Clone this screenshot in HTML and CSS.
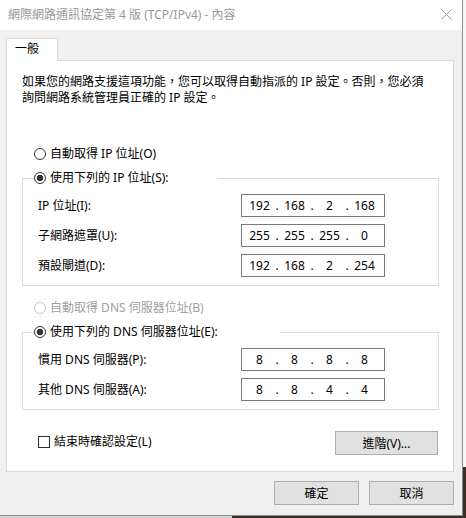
FILE: index.html
```html
<!DOCTYPE html>
<html>
  <head>
    <meta charset="utf-8">
    <title>網際網路通訊協定第 4 版 (TCP/IPv4) - 內容</title>
    <link rel="stylesheet" href="styles.css">
  </head>
  <body>
    <div class="window">
      <div class="titlebar">
        <span class="title">網際網路通訊協定第 4 版 (TCP/IPv4) - 內容</span>
        <svg class="close" width="11" height="11" viewBox="0 0 11 11">
          <path d="M0.5 0.5 L10.5 10.5 M10.5 0.5 L0.5 10.5" stroke="#9a9a9a" stroke-width="1" fill="none"/>
        </svg>
      </div>
      <div class="client">
        <div class="tabs">
          <div class="tab">一般</div>
        </div>
        <div class="panel">
          <p class="intro">如果您的網路支援這項功能，您可以取得自動指派的 IP 設定。否則，您必須<br>詢問網路系統管理員正確的 IP 設定。</p>

          <label class="option first"><span class="radio"></span>自動取得 IP 位址(O)</label>
          <fieldset class="group">
            <legend class="ip-legend"><label class="option"><span class="radio on"></span>使用下列的 IP 位址(S):</label></legend>
            <div class="rows">
              <span class="label">IP 位址(I):</span>
              <div class="ip"><span class="oct">192</span><span class="dot">.</span><span class="oct">168</span><span class="dot">.</span><span class="oct">2</span><span class="dot">.</span><span class="oct">168</span></div>
              <span class="label">子網路遮罩(U):</span>
              <div class="ip"><span class="oct">255</span><span class="dot">.</span><span class="oct">255</span><span class="dot">.</span><span class="oct">255</span><span class="dot">.</span><span class="oct">0</span></div>
              <span class="label">預設閘道(D):</span>
              <div class="ip"><span class="oct">192</span><span class="dot">.</span><span class="oct">168</span><span class="dot">.</span><span class="oct">2</span><span class="dot">.</span><span class="oct">254</span></div>
            </div>
          </fieldset>

          <label class="option second disabled"><span class="radio"></span>自動取得 DNS 伺服器位址(B)</label>
          <fieldset class="group">
            <legend class="dns-legend"><label class="option"><span class="radio on"></span>使用下列的 DNS 伺服器位址(E):</label></legend>
            <div class="rows">
              <span class="label">慣用 DNS 伺服器(P):</span>
              <div class="ip"><span class="oct">8</span><span class="dot">.</span><span class="oct">8</span><span class="dot">.</span><span class="oct">8</span><span class="dot">.</span><span class="oct">8</span></div>
              <span class="label">其他 DNS 伺服器(A):</span>
              <div class="ip"><span class="oct">8</span><span class="dot">.</span><span class="oct">8</span><span class="dot">.</span><span class="oct">4</span><span class="dot">.</span><span class="oct">4</span></div>
            </div>
          </fieldset>

          <div class="bottom-row">
            <label class="check"><span class="box"></span>結束時確認設定(L)</label>
            <button class="btn advanced">進階(V)...</button>
          </div>
        </div>
        <div class="footer">
          <button class="btn">確定</button>
          <button class="btn">取消</button>
        </div>
      </div>
    </div>
  </body>
</html>
```

FILE: styles.css
```css
html, body {
    margin: 0;
    padding: 0;
}

body {
    width: 466px;
    height: 518px;
    overflow: hidden;
    font-family: "Noto Sans", "Noto Sans CJK TC", sans-serif;
    font-size: 12px;
    color: #000;
    background:
        linear-gradient(#f7f7f7, #f7f7f7) right top / 3px 467px no-repeat,
        linear-gradient(#d4d4d4, #d4d4d4) left bottom / 232px 3px no-repeat,
        #3b2e26;
}

.window {
    width: 462px;
    height: 515px;
    border-right: 1px solid #8c8c8c;
    border-bottom: 1px solid #8c8c8c;
    background: #f0f0f0;
    display: flex;
    flex-direction: column;
}

.titlebar {
    height: 30px;
    background: #fff;
    display: flex;
    align-items: center;
    justify-content: space-between;
    padding: 0 10px 1px 8px;
    box-sizing: border-box;
}

.title {
    color: #999;
    line-height: 16px;
}

.close {
    display: block;
    margin-top: 0;
}

.client {
    padding: 8px 8px 0 6px;
}

.tabs {
    display: flex;
}

.tab {
    position: relative;
    z-index: 1;
    width: 52px;
    height: 23px;
    box-sizing: border-box;
    margin-bottom: -1px;
    padding-left: 8px;
    line-height: 20px;
    background: #fff;
    border: 1px solid #d9d9d9;
    border-bottom: none;
}

.panel {
    background: #fff;
    border: 1px solid #d9d9d9;
    padding: 13px 14px 16px 15px;
}

.intro {
    margin: 0;
    line-height: 16px;
}

.option {
    display: flex;
    align-items: center;
    line-height: 16px;
    white-space: nowrap;
}

.option.first {
    margin-top: 40px;
    padding-left: 12px;
}

.option.second {
    margin-top: 14px;
    padding-left: 12px;
}

.option.disabled {
    color: #a0a0a0;
}

.radio {
    width: 12px;
    height: 12px;
    box-sizing: border-box;
    border: 1px solid #333;
    border-radius: 50%;
    margin-right: 4px;
    background: #fff;
}

.radio.on {
    background: radial-gradient(circle, #333 0, #333 3px, #fff 3.6px);
}

.disabled .radio {
    border-color: #c4c4c4;
}

.group {
    margin: 8px 0 0 0;
    padding: 8px 0 8px 0;
    border: 1px solid #dcdcdc;
    min-width: 0;
}

.group legend {
    padding: 0;
    margin-left: 11px;
}

.ip-legend {
    width: 183px;
}

.dns-legend {
    width: 246px;
}

.rows {
    display: grid;
    grid-template-columns: 203px 144px;
    row-gap: 7px;
    padding-left: 15px;
}

.label {
    line-height: 23px;
    white-space: nowrap;
}

.ip {
    display: flex;
    align-items: center;
    height: 23px;
    box-sizing: border-box;
    border: 1px solid #7a7a7a;
    padding-left: 4px;
    line-height: 16px;
}

.oct {
    width: 27px;
    text-align: center;
}

.dot {
    width: 8px;
    text-align: center;
}

.bottom-row {
    display: flex;
    align-items: center;
    justify-content: space-between;
    margin-top: 21px;
    padding-left: 16px;
}

.check {
    display: flex;
    align-items: center;
    line-height: 16px;
    margin-top: -3px;
}

.box {
    width: 12px;
    height: 12px;
    box-sizing: border-box;
    border: 1px solid #333;
    margin-right: 4px;
}

.btn {
    font-family: inherit;
    font-size: 12px;
    color: #000;
    height: 24px;
    width: 85px;
    padding: 0;
    background: #e1e1e1;
    border: 1px solid #adadad;
    border-radius: 0;
}

.btn.advanced {
    width: 103px;
    margin-right: 1px;
}

.footer {
    display: flex;
    justify-content: flex-end;
    gap: 10px;
    padding-top: 9px;
}
```
